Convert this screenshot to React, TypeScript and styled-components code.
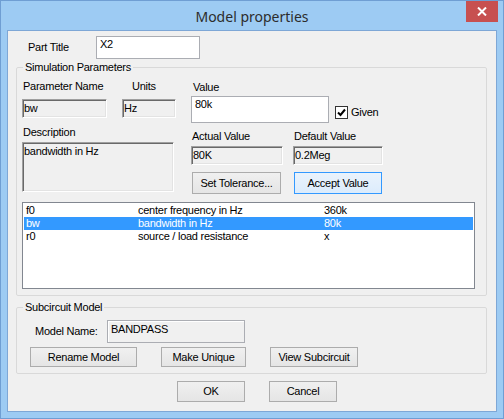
import React from 'react';
import styled, { createGlobalStyle } from 'styled-components';

const GlobalStyle = createGlobalStyle`
  html, body {
    margin: 0;
    padding: 0;
    background: #ffffff;
  }
  * {
    box-sizing: border-box;
  }
`;

const StyledWindow = styled.div`
  width: 504px;
  height: 419px;
  display: flex;
  flex-direction: column;
  padding: 0 6px 6px 6px;
  border: solid 1px #6f9ed3;
  background-color: #9dcbf3;
  font-family: 'Liberation Sans', Arial, sans-serif;
  font-size: 11px;
  letter-spacing: -0.25px;
  color: #000000;
`;

const StyledTitleBar = styled.div`
  position: relative;
  height: 29px;
  flex-shrink: 0;
  display: flex;
  justify-content: center;
  align-items: center;

  span {
    font-family: 'Noto Sans', 'Open Sans', sans-serif;
    font-size: 14px;
    letter-spacing: 0;
    color: #2c2c2c;
    padding-top: 2px;
  }
`;

const StyledClose = styled.div`
  position: absolute;
  top: 0;
  right: -1px;
  width: 32px;
  height: 21px;
  background-color: #c75050;
  display: flex;
  justify-content: center;
  align-items: center;
`;

const StyledClient = styled.div`
  flex: 1;
  display: flex;
  flex-direction: column;
  border: solid 1px #7ea7d6;
  background-color: #f0f0f0;
  padding: 5px 0 0 0;
`;

const StyledTitleRow = styled.div`
  display: flex;
  align-items: center;
  padding-left: 20px;
`;

const StyledRowLabel = styled.span<{ $width: number }>`
  width: ${(p) => p.$width}px;
  line-height: 13px;
`;

const StyledEdit = styled.div<{ $width: number; $height: number }>`
  width: ${(p) => p.$width}px;
  height: ${(p) => p.$height}px;
  background-color: #ffffff;
  border: solid 1px #abadb3;
  padding: 1px 3px;
  line-height: 13px;
`;

const StyledReadOnly = styled.div<{ $width: number; $height: number }>`
  width: ${(p) => p.$width}px;
  height: ${(p) => p.$height}px;
  background-color: #f0f0f0;
  border-style: solid;
  border-width: 1px;
  border-color: #a0a0a0 #ffffff #ffffff #a0a0a0;
  box-shadow: inset 1px 1px 0 #696969, inset -1px -1px 0 #e3e3e3;
  padding: 2px 1px;
  line-height: 13px;
`;

const StyledStatic = styled.div<{ $width: number; $height: number }>`
  width: ${(p) => p.$width}px;
  height: ${(p) => p.$height}px;
  background-color: #f0f0f0;
  border: solid 1px #abadb3;
  box-shadow: inset 1px 1px 0 #ffffff;
  padding: 2px 3px;
  line-height: 13px;
`;

const StyledGroup = styled.fieldset<{ $top: number }>`
  margin: ${(p) => p.$top}px 9px 0 8px;
  padding: 0 0 6px 0;
  border: solid 1px #d9d9d9;
  border-radius: 2px;
  min-width: 0;

  legend {
    margin-left: 6px;
    padding: 0 2px 0 2px;
    line-height: 13px;
    font-size: 11px;
  }
`;

const StyledParamArea = styled.div`
  display: flex;
  padding: 6px 0 0 5px;
  gap: 15px;
`;

const StyledColumn = styled.div`
  display: flex;
  flex-direction: column;
`;

const StyledLabel = styled.span<{ $top?: number; $left?: number; $bottom?: number }>`
  display: block;
  line-height: 13px;
  margin-top: ${(p) => p.$top ?? 0}px;
  margin-left: ${(p) => p.$left ?? 1}px;
  margin-bottom: ${(p) => p.$bottom ?? 3}px;
  white-space: nowrap;
`;

const StyledPair = styled.div<{ $gap: number }>`
  display: flex;
  gap: ${(p) => p.$gap}px;
`;

const StyledFieldCol = styled.div`
  display: flex;
  flex-direction: column;
`;

const StyledValueRow = styled.div`
  display: flex;
  align-items: center;
  gap: 6px;
`;

const StyledCheck = styled.label`
  display: flex;
  align-items: center;
  gap: 3px;
  margin-top: 5px;

  span {
    width: 13px;
    height: 13px;
    border: solid 1px #333333;
    background-color: #ffffff;
    display: flex;
    justify-content: center;
    align-items: center;
  }
`;

const StyledButton = styled.button<{ $width: number; $height: number; $default?: boolean }>`
  width: ${(p) => p.$width}px;
  height: ${(p) => p.$height}px;
  padding: 0;
  border: solid 1px ${(p) => (p.$default ? '#3399ff' : '#acacac')};
  background: ${(p) =>
    p.$default
      ? 'linear-gradient(#eaf3fc, #dcecfc)'
      : 'linear-gradient(#f0f0f0, #e5e5e5)'};
  font-family: 'Liberation Sans', Arial, sans-serif;
  font-size: 11px;
  letter-spacing: -0.25px;
  color: #000000;
  line-height: 13px;
`;

const StyledButtonRow = styled.div<{ $top: number; $left: number; $gap: number }>`
  display: flex;
  margin-top: ${(p) => p.$top}px;
  padding-left: ${(p) => p.$left}px;
  gap: ${(p) => p.$gap}px;
`;

const StyledList = styled.div`
  margin: 8px 0 0 5px;
  width: 453px;
  height: 87px;
  background-color: #ffffff;
  border: solid 1px #828790;
  padding: 1px 1px 0 1px;
`;

const StyledListRow = styled.div<{ $selected?: boolean }>`
  display: grid;
  grid-template-columns: 112px 186px 1fr;
  height: 13px;
  line-height: 13px;
  padding-left: 2px;
  background-color: ${(p) => (p.$selected ? '#3399ff' : 'transparent')};
  color: ${(p) => (p.$selected ? '#ffffff' : '#000000')};
`;

const StyledModelRow = styled.div`
  display: flex;
  align-items: center;
  padding: 6px 0 0 18px;
`;

const params = [
  { name: 'f0', desc: 'center frequency in Hz', value: '360k' },
  { name: 'bw', desc: 'bandwidth in Hz', value: '80k' },
  { name: 'r0', desc: 'source / load resistance', value: 'x' },
];

export default function App() {
  return (
    <>
      <GlobalStyle />
      <StyledWindow>
        <StyledTitleBar>
          <span>Model properties</span>
          <StyledClose>
            <svg width="10" height="9" viewBox="0 0 10 9">
              <path d="M1 0.5 L9 8.5 M9 0.5 L1 8.5" stroke="#ffffff" strokeWidth="2" />
            </svg>
          </StyledClose>
        </StyledTitleBar>
        <StyledClient>
          <StyledTitleRow>
            <StyledRowLabel $width={68}>Part Title</StyledRowLabel>
            <StyledEdit $width={104} $height={23}>
              X2
            </StyledEdit>
          </StyledTitleRow>

          <StyledGroup $top={2}>
            <legend>Simulation Parameters</legend>
            <StyledParamArea>
              <StyledColumn>
                <StyledPair $gap={15}>
                  <StyledFieldCol>
                    <StyledLabel $bottom={6}>Parameter Name</StyledLabel>
                    <StyledReadOnly $width={85} $height={19}>
                      bw
                    </StyledReadOnly>
                  </StyledFieldCol>
                  <StyledFieldCol>
                    <StyledLabel $left={10} $bottom={6}>
                      Units
                    </StyledLabel>
                    <StyledReadOnly $width={54} $height={19}>
                      Hz
                    </StyledReadOnly>
                  </StyledFieldCol>
                </StyledPair>
                <StyledLabel $top={8}>Description</StyledLabel>
                <StyledReadOnly $width={152} $height={50}>
                  bandwidth in Hz
                </StyledReadOnly>
              </StyledColumn>

              <StyledColumn>
                <StyledLabel $top={1} $left={2} $bottom={2}>
                  Value
                </StyledLabel>
                <StyledValueRow>
                  <StyledEdit $width={138} $height={27}>
                    80k
                  </StyledEdit>
                  <StyledCheck>
                    <span>
                      <svg width="9" height="9" viewBox="0 0 9 9">
                        <path d="M1 4.5 L3.5 7 L8 1.5" stroke="#000000" strokeWidth="2" fill="none" />
                      </svg>
                    </span>
                    Given
                  </StyledCheck>
                </StyledValueRow>
                <StyledPair $gap={10}>
                  <StyledFieldCol>
                    <StyledLabel $top={7}>Actual Value</StyledLabel>
                    <StyledReadOnly $width={92} $height={19}>
                      80K
                    </StyledReadOnly>
                  </StyledFieldCol>
                  <StyledFieldCol>
                    <StyledLabel $top={7}>Default Value</StyledLabel>
                    <StyledReadOnly $width={90} $height={19}>
                      0.2Meg
                    </StyledReadOnly>
                  </StyledFieldCol>
                </StyledPair>
                <StyledButtonRow $top={7} $left={1} $gap={13}>
                  <StyledButton $width={89} $height={22}>
                    Set Tolerance...
                  </StyledButton>
                  <StyledButton $width={88} $height={22} $default>
                    Accept Value
                  </StyledButton>
                </StyledButtonRow>
              </StyledColumn>
            </StyledParamArea>

            <StyledList>
              {params.map((p) => (
                <StyledListRow key={p.name} $selected={p.name === 'bw'}>
                  <span>{p.name}</span>
                  <span>{p.desc}</span>
                  <span>{p.value}</span>
                </StyledListRow>
              ))}
            </StyledList>
          </StyledGroup>

          <StyledGroup $top={5}>
            <legend>Subcircuit Model</legend>
            <StyledModelRow>
              <StyledRowLabel $width={72}>Model Name:</StyledRowLabel>
              <StyledStatic $width={138} $height={23}>
                BANDPASS
              </StyledStatic>
            </StyledModelRow>
            <StyledButtonRow $top={4} $left={13} $gap={24}>
              <StyledButton $width={107} $height={20}>
                Rename Model
              </StyledButton>
              <StyledButton $width={85} $height={20}>
                Make Unique
              </StyledButton>
              <StyledButton $width={88} $height={20}>
                View Subcircuit
              </StyledButton>
            </StyledButtonRow>
          </StyledGroup>

          <StyledButtonRow $top={7} $left={169} $gap={24}>
            <StyledButton $width={68} $height={21}>
              OK
            </StyledButton>
            <StyledButton $width={68} $height={21}>
              Cancel
            </StyledButton>
          </StyledButtonRow>
        </StyledClient>
      </StyledWindow>
    </>
  );
}
